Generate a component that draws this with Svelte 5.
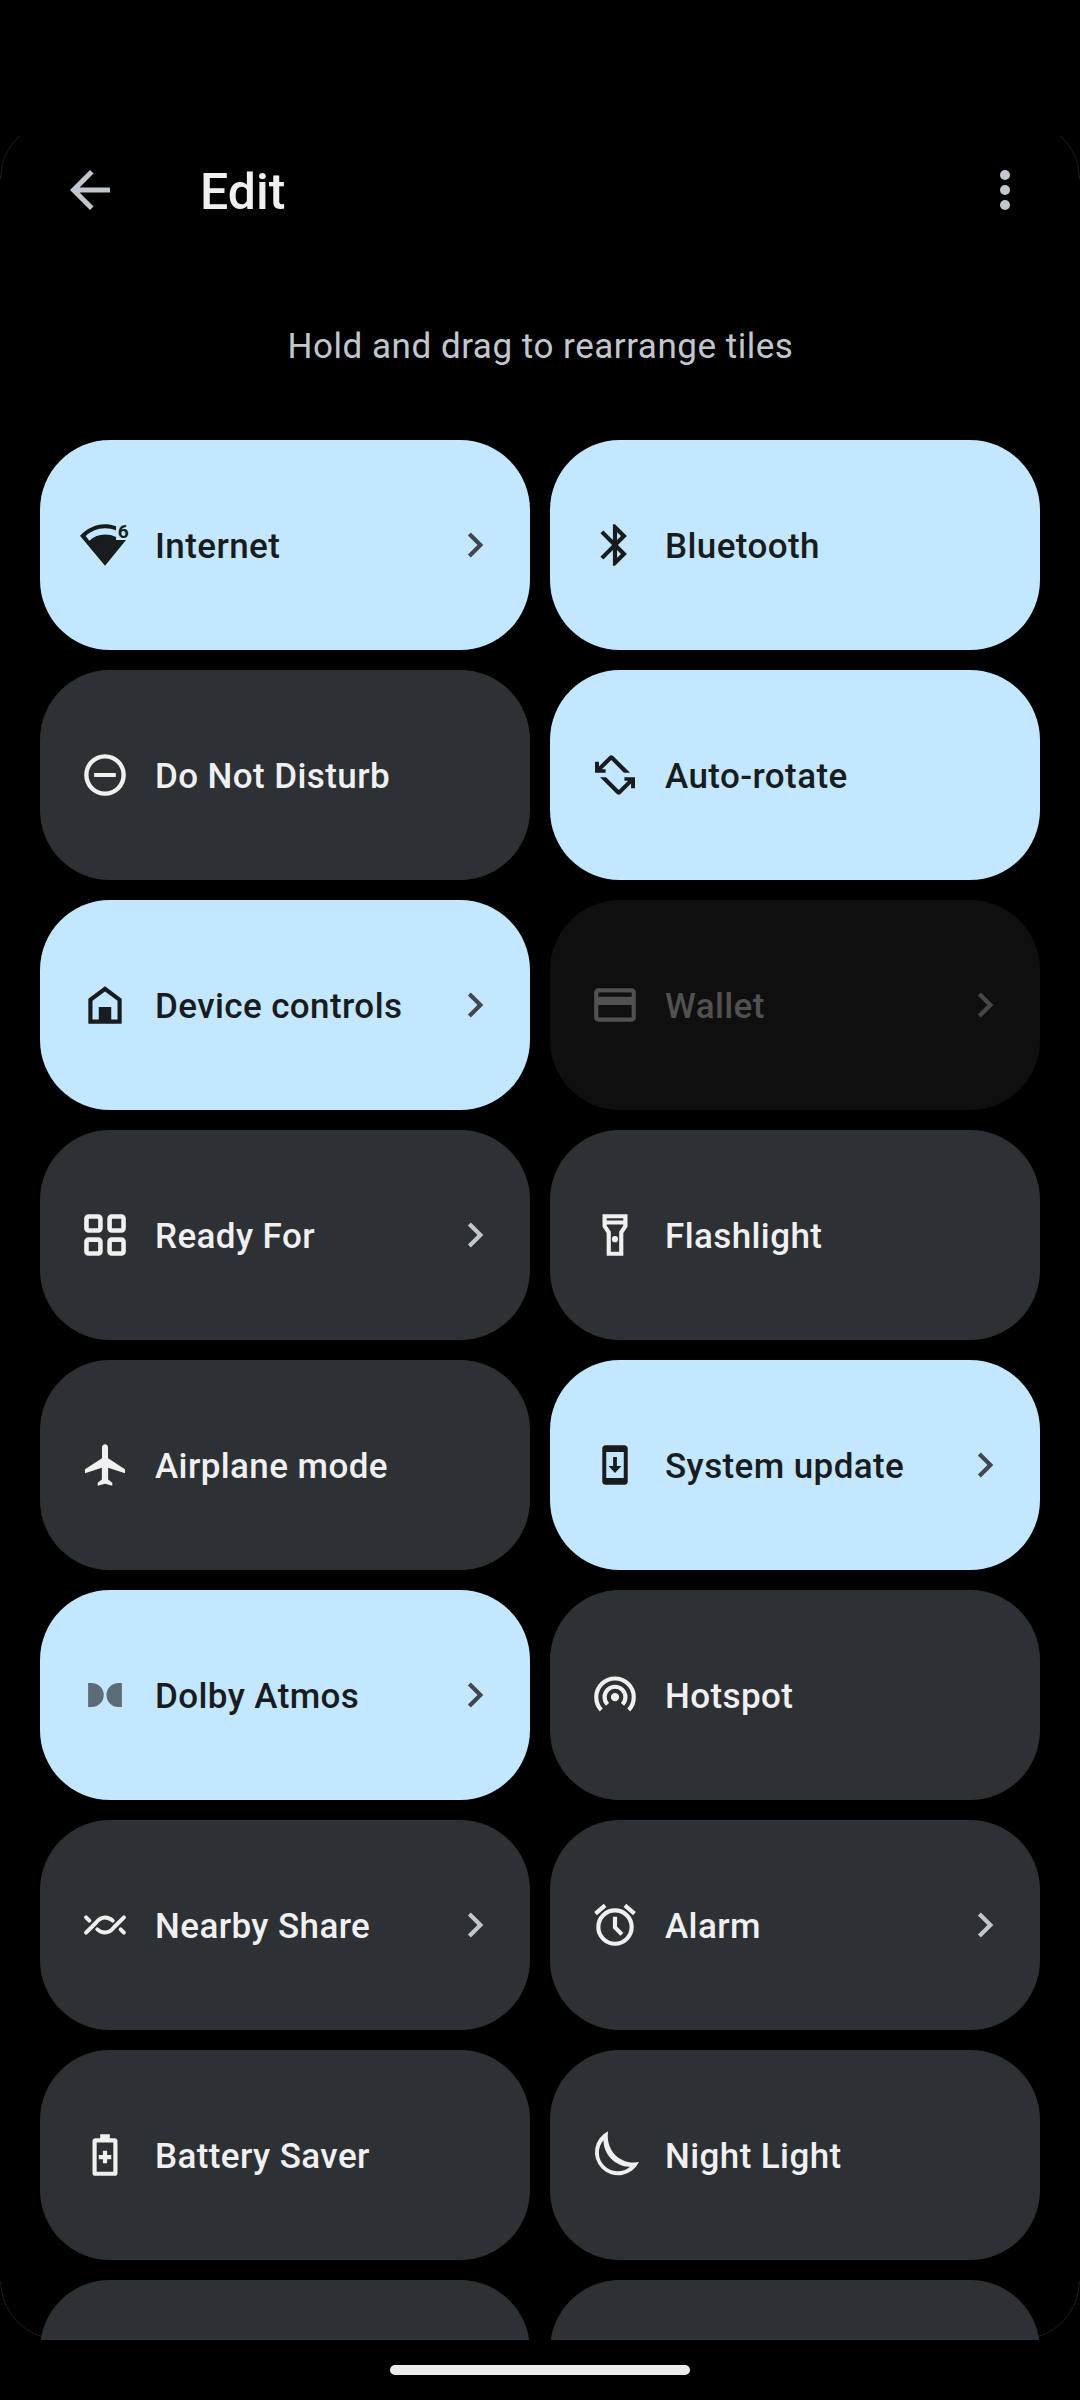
<script>
  const tiles = [
    { label: "Internet", icon: "wifi", state: "active", chevron: true },
    { label: "Bluetooth", icon: "bluetooth", state: "active" },
    { label: "Do Not Disturb", icon: "dnd", state: "inactive" },
    { label: "Auto-rotate", icon: "rotate", state: "active" },
    { label: "Device controls", icon: "home", state: "active", chevron: true },
    { label: "Wallet", icon: "wallet", state: "unavailable", chevron: true },
    { label: "Ready For", icon: "grid", state: "inactive", chevron: true },
    { label: "Flashlight", icon: "flashlight", state: "inactive" },
    { label: "Airplane mode", icon: "airplane", state: "inactive" },
    { label: "System update", icon: "update", state: "active", chevron: true },
    { label: "Dolby Atmos", icon: "dolby", state: "active", chevron: true },
    { label: "Hotspot", icon: "hotspot", state: "inactive" },
    { label: "Nearby Share", icon: "nearby", state: "inactive", chevron: true },
    { label: "Alarm", icon: "alarm", state: "inactive", chevron: true },
    { label: "Battery Saver", icon: "battery", state: "inactive" },
    { label: "Night Light", icon: "moon", state: "inactive" },
    { label: "", icon: "", state: "inactive" },
    { label: "", icon: "", state: "inactive" },
  ];

  // Filled icons, 24x24 grid
  const paths = {
    wifi: "M12 2C7.3 2 3.2 4.2 0 7.5L12 22l10.1-12.4h-4.8V8.2C15.7 7.4 13.9 7 12 7 9.1 7 6.6 8.1 4.5 9.9L2.7 7.7C5.3 5.4 8.5 4 12 4c1.9 0 3.7.4 5.3 1V3C15.6 2.3 13.8 2 12 2z",
    bluetooth: "M17.71 7.71L12 2h-1v7.59L6.41 5 5 6.41 10.59 12 5 17.59 6.41 19 11 14.41V22h1l5.71-5.71-4.3-4.29 4.3-4.29zM13 5.83l1.88 1.88L13 9.59V5.83zm1.88 10.46L13 18.17v-3.76l1.88 1.88z",
    dnd: "M12 2a10 10 0 1 0 0 20 10 10 0 0 0 0-20zm0 2.1a7.9 7.9 0 1 1 0 15.8 7.9 7.9 0 0 1 0-15.8zM6.8 11v2h10.4v-2z",
    rotate: "M2.4 5.6h1.9v2.3L9.2 3q1-1 2 0l8 7.9h-2.9l-6.1-6.1-4.5 4.5h1.8v1.6H2.4zM21.6 18.4h-1.9v-2.3L14.8 21q-1 1-2 0l-8-7.9h2.9l6.1 6.1 4.5-4.5h-1.8v-1.6h5.1z",
    home: "M12 3L4 9v12h16V9zM6 10l6-4.5 6 4.5v9h-3v-6H9v6H6z",
    wallet: "M20 4H4c-1.11 0-2 .89-2 2v12c0 1.11.89 2 2 2h16c1.11 0 2-.89 2-2V6c0-1.11-.89-2-2-2zm0 14H4v-6h16v6zm0-10H4V6h16v2z",
    flashlight: "M18 2H6v6l2 3v11h8V11l2-3V2zm-2 2v1H8V4h8zm-2 6.4V20h-4v-9.6L8 7.4V7h8v.4l-2 3zM12 12.5a1.5 1.5 0 1 0 0 3 1.5 1.5 0 0 0 0-3z",
    airplane: "M12 2c-.8 0-1.45.65-1.45 1.45V8.8L2.4 14v1.9l8.1-2.6v5.6l-2 1.6V22l3.5-1 3.5 1v-1.5l-2-1.6v-5.6l8.1 2.6V14l-8.15-5.2V3.45C13.45 2.65 12.8 2 12 2z",
    update: "M7.5 2.5h9c.9 0 1.6.7 1.6 1.5v16c0 .8-.7 1.5-1.6 1.5h-9c-.9 0-1.6-.7-1.6-1.5V4c0-.8.7-1.5 1.6-1.5zM7.8 5.7v12.5h8.4V5.7zM11.1 8.1h1.8v4.4h2.2L12 15.8l-3.1-3.3h2.2z",
    dolby: "M3.9 6.2h1.7a5.8 5.8 0 0 1 0 11.6H3.9zM20.1 6.2h-1.6a5.8 5.8 0 0 0 0 11.6h1.6z",
    moon: "M8.7.6A11.1 11.1 0 1 0 23.5 15.4C14.5 17 7.3 9.8 8.7.6zM6.5 4.9A9 9 0 0 0 19.2 17.6C12.5 17.8 6.3 11.6 6.5 4.9z",
    battery: "M14.3 4V2H9.7v2H7.3C6.6 4 6 4.6 6 5.3v15.4c0 .7.6 1.3 1.3 1.3h9.4c.7 0 1.3-.6 1.3-1.3V5.3c0-.7-.6-1.3-1.3-1.3zM8 6h8v14H8zM11 10v2H9v2h2v2h2v-2h2v-2h-2v-2z",
  };

  // Stroked icons
  const strokes = {
    grid: { width: 2.2, cap: "butt", d: "M4.1 3.1h4.7a1 1 0 0 1 1 1v4.7a1 1 0 0 1-1 1H4.1a1 1 0 0 1-1-1V4.1a1 1 0 0 1 1-1zM15.2 3.1h4.7a1 1 0 0 1 1 1v4.7a1 1 0 0 1-1 1h-4.7a1 1 0 0 1-1-1V4.1a1 1 0 0 1 1-1zM4.1 14.2h4.7a1 1 0 0 1 1 1v4.7a1 1 0 0 1-1 1H4.1a1 1 0 0 1-1-1v-4.7a1 1 0 0 1 1-1zM15.2 14.2h4.7a1 1 0 0 1 1 1v4.7a1 1 0 0 1-1 1h-4.7a1 1 0 0 1-1-1v-4.7a1 1 0 0 1 1-1z" },
    hotspot: { width: 2, cap: "butt", d: "M5.4 19.2A9 9 0 1 1 18.6 19.2M8.4 16.5A5 5 0 1 1 15.6 16.5M12 12a1 1 0 1 1 0 2 1 1 0 1 1 0-2z" },
    nearby: { width: 1.9, cap: "round", d: "M2.9 15.7L7.6 11C8.9 9.3 10.3 8.4 12 8.4c1.4 0 2.6.5 3.7 1.5M21.1 8.3L16.4 13c-1.3 1.7-2.7 2.6-4.4 2.6-1.4 0-2.6-.5-3.7-1.5M2.9 8.3l1.6 1.6M21.1 15.7l-1.6-1.6" },
    alarm: { width: 2, cap: "butt", d: "M12 5a8 8 0 1 1 0 16 8 8 0 1 1 0-16zM12 8v5.2l3.3 3.3M2.65 6.5L7.25 2.6M21.35 6.5L16.75 2.6" },
  };
</script>

<div class="screen">
  <!-- Faint edge of the rounded panel corners -->
  <svg class="corners" viewBox="0 0 1080 2400" fill="none" stroke="#1d1d1d" stroke-width="1">
    <path d="M.5 179A59.5 59.5 0 0 1 20 135.5M1079.5 179A59.5 59.5 0 0 0 1060 135.5" />
    <path d="M.5 2281A59 59 0 0 0 59.5 2339.5M1079.5 2281A59 59 0 0 1 1020.5 2339.5" />
  </svg>

  <header>
    <svg class="header-icon" viewBox="0 0 24 24">
      <path d="M20 11H7.83l5.59-5.59L12 4l-8 8 8 8 1.41-1.41L7.83 13H20v-2z" />
    </svg>
    <h1>Edit</h1>
    <svg class="header-icon" viewBox="0 0 24 24">
      <circle cx="12" cy="6" r="2" />
      <circle cx="12" cy="12" r="2" />
      <circle cx="12" cy="18" r="2" />
    </svg>
  </header>

  <p class="hint">Hold and drag to rearrange tiles</p>

  <main>
    {#each tiles as tile}
      <div class="tile {tile.state}">
        {#if tile.icon}
          <svg class="icon {tile.icon}" viewBox="0 0 24 24">
            {#if paths[tile.icon]}
              <path fill-rule="evenodd" d={paths[tile.icon]} />
            {:else}
              <path
                d={strokes[tile.icon].d}
                fill="none"
                stroke="currentColor"
                stroke-width={strokes[tile.icon].width}
                stroke-linecap={strokes[tile.icon].cap}
              />
            {/if}
            {#if tile.icon === "wifi"}
              <text x="18.1" y="8.4">6</text>
            {/if}
          </svg>
          <span class="label">{tile.label}</span>
        {/if}
        {#if tile.chevron}
          <svg class="chevron" viewBox="0 0 24 24">
            <path d="M8.59 16.59L13.17 12 8.59 7.41 10 6l6 6-6 6z" />
          </svg>
        {/if}
      </div>
    {/each}
  </main>

  <footer>
    <div class="handle"></div>
  </footer>
</div>

<style>
  :global(body) {
    background: #000;
  }

  .screen {
    position: relative;
    display: flex;
    flex-direction: column;
    width: 1080px;
    height: 2400px;
    overflow: hidden;
    background: #000;
    font-family: Roboto, "Liberation Sans", sans-serif;
  }

  .corners {
    position: absolute;
    inset: 0;
    width: 1080px;
    height: 2400px;
  }

  header {
    display: flex;
    align-items: center;
    height: 140px;
    margin-top: 120px;
    padding: 0 45px 0 60px;
    color: #c0c7cf;
  }

  .header-icon {
    width: 60px;
    height: 60px;
    fill: currentColor;
  }

  h1 {
    flex: 1;
    margin: 4px 0 0 80px;
    font-size: 50px;
    font-weight: 500;
    line-height: 60px;
    color: #f0f0f3;
  }

  .hint {
    height: 180px;
    margin: 0;
    padding: 62px 0 0 1px;
    box-sizing: border-box;
    text-align: center;
    font-size: 35px;
    line-height: 50px;
    letter-spacing: 0.52px;
    color: #c0c7cd;
  }

  main {
    position: relative;
    display: grid;
    grid-template-columns: 490px 490px;
    grid-auto-rows: 210px;
    gap: 20px;
    height: 1900px;
    padding: 0 40px;
    overflow: hidden;
  }

  .tile {
    display: flex;
    align-items: center;
    padding: 0 30px 0 40px;
    border-radius: 70px;
    background: #2e3133;
    color: #f0f0f3;
  }

  .tile.active {
    background: #c3e7ff;
    color: #191c1e;
  }

  .tile.unavailable {
    background: #0f0f0f;
    color: #515151;
  }

  .icon,
  .chevron {
    flex: none;
    width: 50px;
    height: 50px;
    fill: currentColor;
    overflow: visible;
  }

  .icon text {
    font-size: 9.2px;
    font-weight: 700;
  }

  .icon.dolby {
    opacity: 0.6;
  }

  .label {
    flex: 1;
    margin: 3px 0 0 25px;
    font-size: 35px;
    font-weight: 500;
    line-height: 50px;
    letter-spacing: 0.4px;
  }

  .chevron {
    color: #c0c7cd;
  }

  .active .chevron {
    color: #40484d;
  }

  .unavailable .chevron {
    color: #45474a;
  }

  footer {
    display: flex;
    align-items: center;
    justify-content: center;
    height: 60px;
  }

  .handle {
    width: 300px;
    height: 10px;
    border-radius: 5px;
    background: #ececec;
  }
</style>
